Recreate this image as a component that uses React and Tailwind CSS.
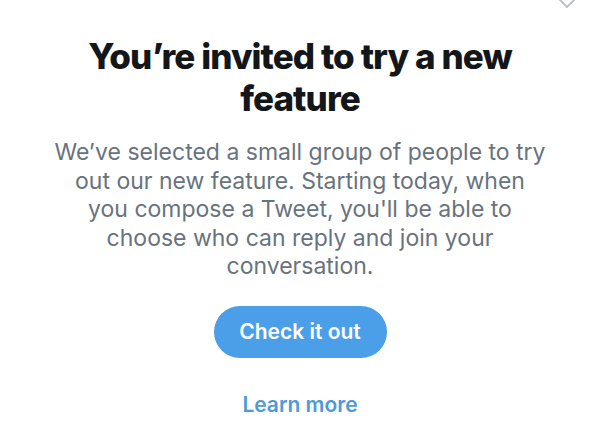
export default function App() {
  return (
    <div className="relative w-[600px] h-[428px] bg-white overflow-hidden flex flex-col items-center" style={{ fontFamily: "Inter, 'Noto Sans', sans-serif" }}>
      {/* collapse chevron */}
      <svg className="absolute right-[23px] top-[-4px]" width="20" height="14" viewBox="0 0 20 14" fill="none">
        <path d="M2 3l8 8 8-8" stroke="#b8c0c8" strokeWidth="1.8" strokeLinecap="round" strokeLinejoin="round" />
      </svg>

      <h1 className="mt-[35px] px-[80px] text-center text-[35px] leading-[42px] font-extrabold tracking-[-0.9px] text-[#14171a]">
        You’re invited to try a new feature
      </h1>

      <p className="mt-[19px] px-[54px] text-center text-[23px] leading-[28.5px] text-[#67737e]">
        We’ve selected a small group of people to try out our new feature. Starting today, when you compose a Tweet, you'll be able to choose who can reply and join your conversation.
      </p>

      <button className="mt-[25px] w-[173px] h-[52px] rounded-full bg-[#4b9ee8] text-white text-[21px] font-semibold">
        Check it out
      </button>

      <button className="mt-[31px] text-[#4e9ad8] text-[21px] font-semibold">
        Learn more
      </button>
    </div>
  );
}
